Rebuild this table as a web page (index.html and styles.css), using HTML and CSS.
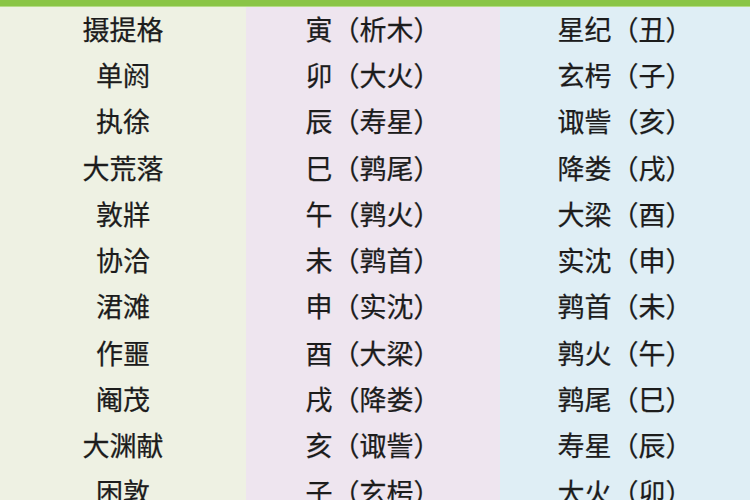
FILE: index.html
```html
<!DOCTYPE html>
<html lang="zh-CN">
<head>
<meta charset="utf-8">
<title>岁阴 岁星 星次</title>
<link rel="stylesheet" href="styles.css">
</head>
<body>
<div class="topbar"></div>
<div class="table">
  <div class="col col-a">
    <div class="cell">摄提格</div>
    <div class="cell">单阏</div>
    <div class="cell">执徐</div>
    <div class="cell">大荒落</div>
    <div class="cell">敦牂</div>
    <div class="cell">协洽</div>
    <div class="cell">涒滩</div>
    <div class="cell">作噩</div>
    <div class="cell">阉茂</div>
    <div class="cell">大渊献</div>
    <div class="cell">困敦</div>
  </div>
  <div class="col col-b">
    <div class="cell">寅（析木）</div>
    <div class="cell">卯（大火）</div>
    <div class="cell">辰（寿星）</div>
    <div class="cell">巳（鹑尾）</div>
    <div class="cell">午（鹑火）</div>
    <div class="cell">未（鹑首）</div>
    <div class="cell">申（实沈）</div>
    <div class="cell">酉（大梁）</div>
    <div class="cell">戌（降娄）</div>
    <div class="cell">亥（诹訾）</div>
    <div class="cell">子（玄枵）</div>
  </div>
  <div class="col col-c">
    <div class="cell">星纪（丑）</div>
    <div class="cell">玄枵（子）</div>
    <div class="cell">诹訾（亥）</div>
    <div class="cell">降娄（戌）</div>
    <div class="cell">大梁（酉）</div>
    <div class="cell">实沈（申）</div>
    <div class="cell">鹑首（未）</div>
    <div class="cell">鹑火（午）</div>
    <div class="cell">鹑尾（巳）</div>
    <div class="cell">寿星（辰）</div>
    <div class="cell">大火（卯）</div>
  </div>
</div>
</body>
</html>
```
FILE: styles.css
```css
html, body {
  margin: 0;
  padding: 0;
  width: 750px;
  height: 500px;
  overflow: hidden;
  background: #e8eef0;
}
body {
  font-family: "Noto Sans CJK SC", "Noto Sans", sans-serif;
  color: #1c1c1c;
}
.topbar {
  height: 6px;
  background: #8ac546;
  border-bottom: 1px solid #b5dc86;
}
.table {
  display: grid;
  grid-template-columns: 246px 254px 250px;
}
.col {
  display: flex;
  flex-direction: column;
}
.col-a { background: #eef1e3; }
.col-b { background: #eee5ef; }
.col-c { background: #dfeef5; }
.cell {
  height: 46.3px;
  box-sizing: border-box;
  padding-bottom: 4px;
  display: flex;
  align-items: center;
  justify-content: center;
  font-size: 27px;
  line-height: 1;
  white-space: nowrap;
  -webkit-text-stroke: 0.25px #1c1c1c;
}
```
